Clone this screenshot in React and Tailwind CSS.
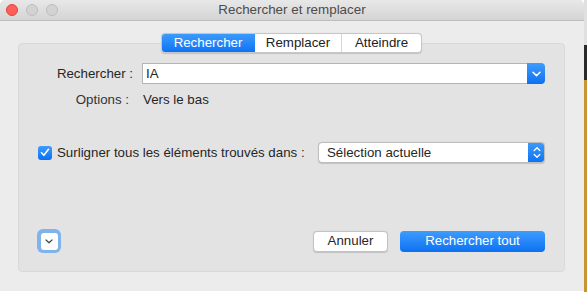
import React from "react";

const font = { fontFamily: '"Liberation Sans", Arial, sans-serif' };

function Chevron({ className = "" }) {
  return (
    <svg width="9" height="6" viewBox="0 0 9 6" className={className}>
      <path d="M1 1.2 L4.5 4.6 L8 1.2" fill="none" stroke="currentColor" strokeWidth="1.5" strokeLinecap="round" strokeLinejoin="round" />
    </svg>
  );
}

function SmallChevron() {
  return (
    <svg width="8" height="5" viewBox="0 0 8 5">
      <path d="M1 1 L4 3.8 L7 1" fill="none" stroke="currentColor" strokeWidth="1.2" strokeLinecap="round" strokeLinejoin="round" />
    </svg>
  );
}

function UpDown() {
  return (
    <svg width="8" height="13" viewBox="0 0 8 13">
      <path d="M1.2 4.5 L4 1.7 L6.8 4.5" fill="none" stroke="white" strokeWidth="1.3" strokeLinecap="round" strokeLinejoin="round" />
      <path d="M1.2 8.5 L4 11.3 L6.8 8.5" fill="none" stroke="white" strokeWidth="1.3" strokeLinecap="round" strokeLinejoin="round" />
    </svg>
  );
}

export default function App() {
  return (
    <div className="w-[587px] h-[292px] flex overflow-hidden" style={font}>
      <div className="w-[584px] h-[291px] flex flex-col bg-[#ececec] rounded-t-[5px] overflow-hidden">
        {/* Title bar */}
        <div className="relative h-[21px] shrink-0 flex items-center justify-center bg-gradient-to-b from-[#e9e8e9] to-[#d5d4d5] border-b border-[#bdbdbd]">
          <div className="absolute left-[6px] top-[4px] flex gap-[8px]">
            <div className="w-[12px] h-[12px] rounded-full bg-[#fc5f57] border border-[#e0443e]" />
            <div className="w-[12px] h-[12px] rounded-full bg-[#d3d3d3] border border-[#bdbdbd]" />
            <div className="w-[12px] h-[12px] rounded-full bg-[#d3d3d3] border border-[#bdbdbd]" />
          </div>
          <span className="text-[13.4px] text-[#4c4c4c] leading-none">Rechercher et remplacer</span>
        </div>

        {/* Body */}
        <div className="flex flex-col pl-[18px] pr-[19px] pt-[12px]">
          {/* Tabs */}
          <div className="relative z-10 flex justify-center">
            <div className="flex h-[20px] rounded-[4px] border border-[#c6c6c6] bg-white text-[13.3px] text-[#222] shadow-[0_0.5px_1px_rgba(0,0,0,0.15)] overflow-hidden">
              <div className="w-[94px] flex items-center justify-center bg-gradient-to-b from-[#3d9cfd] to-[#0a70f2] text-white -my-px -ml-px">Rechercher</div>
              <div className="w-[87px] flex items-center justify-center border-r border-[#d6d6d6]">Remplacer</div>
              <div className="w-[79px] flex items-center justify-center">Atteindre</div>
            </div>
          </div>

          {/* Group box */}
          <div className="-mt-[10px] h-[229px] rounded-[4px] bg-[#e3e3e3] border border-[#d9d9d9] flex flex-col px-[19px] pt-[19px] text-[13.3px] text-[#262626]">
            {/* Search row */}
            <div className="flex items-center h-[21px]">
              <div className="w-[96px] text-right pr-[1px]">Rechercher :</div>
              <div className="ml-[8px] flex-1 flex h-[21px]">
                <div className="flex-1 bg-white border border-[#b4b4b4] border-r-0 flex items-center pl-[3px]">IA</div>
                <div className="w-[18px] rounded-r-[4px] bg-gradient-to-b from-[#3d9cfd] to-[#0a70f2] flex items-center justify-center text-white">
                  <Chevron />
                </div>
              </div>
            </div>
            {/* Options row */}
            <div className="flex items-center h-[20px] mt-[6px]">
              <div className="w-[96px] text-right pr-[5px] text-[#333]">Options :</div>
              <div className="ml-[9px]">Vers le bas</div>
            </div>

            {/* Highlight row */}
            <div className="flex items-center h-[21px] mt-[32px]">
              <div className="w-[14px] h-[14px] rounded-[3px] bg-gradient-to-b from-[#3d9cfd] to-[#0a70f2] flex items-center justify-center">
                <svg width="10" height="9" viewBox="0 0 10 9">
                  <path d="M1.5 4.8 L3.9 7.2 L8.5 1.3" fill="none" stroke="white" strokeWidth="1.6" strokeLinecap="round" strokeLinejoin="round" />
                </svg>
              </div>
              <div className="ml-[5px]">Surligner tous les éléments trouvés dans :</div>
              <div className="ml-auto w-[227px] h-[21px] flex rounded-[4px] bg-white border border-[#bdbdbd] shadow-[0_0.5px_1px_rgba(0,0,0,0.15)] overflow-hidden">
                <div className="flex-1 flex items-center pl-[8px]">Sélection actuelle</div>
                <div className="w-[17px] -my-px -mr-px bg-gradient-to-b from-[#3d9cfd] to-[#0a70f2] flex items-center justify-center">
                  <UpDown />
                </div>
              </div>
            </div>

            {/* Bottom row */}
            <div className="flex items-center mt-[66px]">
              <div className="w-[24px] h-[24px] -ml-[1px] rounded-[6px] bg-[#7fb3ea] flex items-center justify-center">
                <div className="w-[17px] h-[17px] rounded-[3px] bg-white flex items-center justify-center text-[#444]">
                  <SmallChevron />
                </div>
              </div>
              <div className="ml-auto w-[75px] h-[21px] rounded-[4px] bg-white border border-[#c3c3c3] shadow-[0_0.5px_1px_rgba(0,0,0,0.15)] flex items-center justify-center">Annuler</div>
              <div className="ml-[12px] w-[145px] h-[21px] rounded-[4px] bg-gradient-to-b from-[#3d9cfd] to-[#0a70f2] text-white flex items-center justify-center">Rechercher tout</div>
            </div>
          </div>
        </div>
      </div>
      <div className="flex-1 flex flex-col">
        <div className="h-[45px] bg-[#e0e0e0]" />
        <div className="h-[35px] bg-[#2a2a2a]" />
        <div className="flex-1 bg-[#c8962f]" />
      </div>
    </div>
  );
}
